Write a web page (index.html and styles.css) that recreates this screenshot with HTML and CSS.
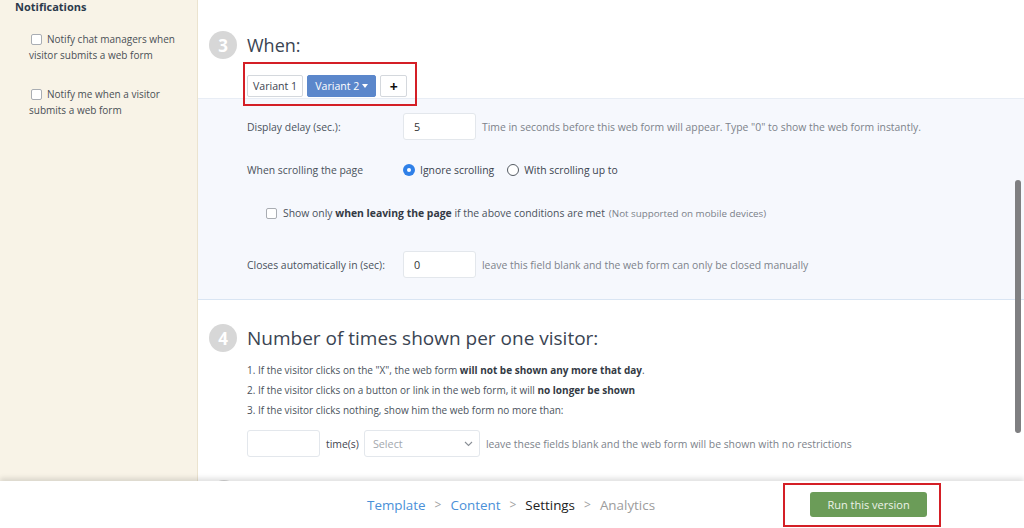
FILE: index.html
```html
<!DOCTYPE html>
<html>
<head>
<meta charset="utf-8">
<link rel="stylesheet" href="styles.css">
</head>
<body>
<div class="app">
  <div class="top">
    <aside class="sidebar">
      <div class="side-title">Notifications</div>
      <label class="notify"><span class="cb"></span>Notify chat managers when visitor submits a web form</label>
      <label class="notify"><span class="cb"></span>Notify me when a visitor submits a web form</label>
    </aside>
    <main class="main">
      <section class="step">
        <div class="step-head">
          <span class="num">3</span>
          <h2 class="step-title">When:</h2>
        </div>
        <div class="variants">
          <span class="vbtn">Variant 1</span>
          <span class="vbtn active">Variant 2 <span class="caret"></span></span>
          <span class="vbtn plus">+</span>
        </div>
      </section>
      <div class="panel">
        <div class="row">
          <span class="lbl">Display delay (sec.):</span>
          <span class="input">5</span>
          <span class="help">Time in seconds before this web form will appear. Type "0" to show the web form instantly.</span>
        </div>
        <div class="row row-radio">
          <span class="lbl">When scrolling the page</span>
          <span class="radio on"></span><span class="rtext">Ignore scrolling</span>
          <span class="radio"></span><span class="rtext">With scrolling up to</span>
        </div>
        <div class="row row-check">
          <span class="cb"></span>
          <span class="ctext">Show only <b>when leaving the page</b> if the above conditions are met</span>
          <span class="note">(Not supported on mobile devices)</span>
        </div>
        <div class="row row-close">
          <span class="lbl">Closes automatically in (sec):</span>
          <span class="input">0</span>
          <span class="help">leave this field blank and the web form can only be closed manually</span>
        </div>
      </div>
      <section class="step step4">
        <div class="step-head">
          <span class="num">4</span>
          <h2 class="step-title">Number of times shown per one visitor:</h2>
        </div>
        <ol class="rules">
          <li>1. If the visitor clicks on the "X", the web form <b>will not be shown any more that day</b>.</li>
          <li>2. If the visitor clicks on a button or link in the web form, it will <b>no longer be shown</b></li>
          <li>3. If the visitor clicks nothing, show him the web form no more than:</li>
        </ol>
        <div class="times">
          <span class="input wide"></span>
          <span class="tlabel">time(s)</span>
          <span class="select">Select<svg class="chev" width="9" height="6" viewBox="0 0 9 6"><path d="M1 1l3.5 3.5L8 1" fill="none" stroke="#8a8f96" stroke-width="1.1"/></svg></span>
          <span class="help">leave these fields blank and the web form will be shown with no restrictions</span>
        </div>
        <span class="num next"></span>
      </section>
      <div class="scrollbar"></div>
    </main>
  </div>
  <footer class="footer">
    <nav class="crumbs">
      <span class="crumb done">Template</span>
      <span class="sep">&gt;</span>
      <span class="crumb done">Content</span>
      <span class="sep">&gt;</span>
      <span class="crumb current">Settings</span>
      <span class="sep">&gt;</span>
      <span class="crumb todo">Analytics</span>
    </nav>
    <div class="run-wrap">
      <span class="run">Run this version</span>
    </div>
  </footer>
</div>
</body>
</html>
```
FILE: styles.css
```css
* { box-sizing: border-box; }
html, body { margin: 0; padding: 0; }
body {
  width: 1024px;
  height: 528px;
  overflow: hidden;
  font-family: "Open Sans", "Liberation Sans", sans-serif;
  color: #3b4450;
  background: #fff;
}
.app { display: flex; flex-direction: column; height: 528px; }
.top { display: flex; height: 481px; overflow: hidden; }

.sidebar {
  width: 198px;
  flex: none;
  background: #f8f3e7;
  border-right: 1px solid #ebe3cf;
  padding: 0 14px 0 15px;
}
.side-title {
  font-weight: 700;
  font-size: 11px;
  line-height: 14px;
  color: #2c3a4c;
  margin-top: 0;
}
.notify {
  display: block;
  font-size: 10px;
  line-height: 16px;
  color: #4a4f56;
  padding-left: 14px;
  margin-top: 17px;
}
.notify + .notify { margin-top: 23px; }
.notify .cb { margin: 0 5px 0 2px; vertical-align: -2px; }

.cb {
  display: inline-block;
  width: 11px;
  height: 11px;
  border: 1px solid #a9adb3;
  border-radius: 2px;
  background: #fff;
}

.main { flex: 1; position: relative; background: #fff; }

.step { padding: 0 0 0 11px; }
.step-head { display: flex; align-items: center; height: 28px; margin-top: 31px; }
.num {
  width: 28px;
  height: 28px;
  border-radius: 50%;
  background: #d7d7d7;
  color: #fff;
  font-weight: 700;
  font-size: 17px;
  display: flex;
  align-items: center;
  justify-content: center;
  flex: none;
}
.step-title {
  margin: 0 0 0 10px;
  font-weight: 400;
  font-size: 18px;
  color: #3a4452;
}
.step4 .step-title { font-size: 19px; }

.variants {
  display: inline-flex;
  gap: 4px;
  padding: 11px 5px 8px 2px;
  border: 2px solid #d41f26;
  position: relative;
  z-index: 2;
  margin-left: 34px;
  margin-top: 3px;
  width: 174px;
  height: 44px;
}
.vbtn {
  display: inline-flex;
  align-items: center;
  height: 22px;
  padding: 0 5px;
  border: 1px solid #d4d8dd;
  border-radius: 2px;
  background: #fff;
  font-size: 10.6px;
  color: #3c4450;
}
.vbtn.active {
  background: #5b87cb;
  border-color: #5b87cb;
  color: #fff;
  padding: 0 7px;
}
.caret {
  display: inline-block;
  margin-left: 3px;
  border-left: 3.5px solid transparent;
  border-right: 3.5px solid transparent;
  border-top: 4px solid #fff;
}
.vbtn.plus {
  width: 27px;
  justify-content: center;
  font-weight: 700;
  font-size: 14px;
  color: #111;
}

.panel {
  margin-top: -8px;
  background: #f6f8fd;
  border-top: 1px solid #e8edf5;
  border-bottom: 1px solid #d9e5f3;
  height: 202px;
  padding: 14px 0 0 49px;
  font-size: 10.4px;
  color: #4a525c;
}
.row { display: flex; align-items: center; }
.lbl { width: 156px; flex: none; color: #4a525c; }
.input {
  display: inline-flex;
  align-items: center;
  width: 73px;
  height: 27px;
  padding-left: 10px;
  background: #fff;
  border: 1px solid #e3e7ec;
  border-radius: 3px;
  font-size: 10.8px;
  color: #333;
  flex: none;
}
.help { margin-left: 6px; color: #7d838b; }
.row-radio { margin-top: 23px; }
.radio {
  width: 12px;
  height: 12px;
  border-radius: 50%;
  border: 1.5px solid #555b63;
  background: #fff;
  flex: none;
}
.radio.on { border: none; background: #2f80e8; position: relative; }
.radio.on::after {
  content: "";
  position: absolute;
  left: 4px; top: 4px;
  width: 4px; height: 4px;
  border-radius: 50%;
  background: #fff;
}
.rtext { margin: 0 13px 0 5px; color: #3c444f; }
.row-check { margin-top: 29px; padding-left: 19px; }
.row-check .cb { margin-right: 6px; }
.ctext { color: #4a525c; }
.ctext b { color: #333a44; }
.note { margin-left: 4px; font-size: 9.8px; color: #7b8189; }
.row-close { margin-top: 31px; }

.step4 .step-head { margin-top: 24px; }
.rules {
  list-style: none;
  margin: 8px 0 0 38px;
  padding: 0;
  font-size: 10px;
  line-height: 20px;
  color: #4a525c;
}
.rules b { color: #333a44; }
.times {
  display: flex;
  align-items: center;
  margin: 10px 0 0 38px;
  font-size: 10.4px;
}
.input.wide { width: 73px; }
.tlabel { margin: 0 5px 0 6px; color: #3f4650; }
.select {
  display: inline-flex;
  align-items: center;
  justify-content: space-between;
  width: 116px;
  height: 27px;
  padding: 0 6px 0 8px;
  border: 1px solid #e3e7ec;
  border-radius: 3px;
  background: #fff;
  color: #a3a8ae;
  font-size: 10.8px;
}
.num.next { margin: 23px 0 0 1px; width: 28px; height: 28px; }

.scrollbar {
  position: absolute;
  right: 3px;
  top: 180px;
  width: 6px;
  height: 253px;
  border-radius: 3px;
  background: #7f7f81;
}

.footer {
  height: 47px;
  flex: none;
  background: #fff;
  display: flex;
  align-items: center;
  position: relative;
  box-shadow: 0 -3px 5px rgba(0,0,0,0.12);
  z-index: 3;
}
.crumbs {
  display: flex;
  align-items: center;
  gap: 9px;
  margin-left: 367px;
  font-size: 13.4px;
}
.crumb.done { color: #4a90d8; }
.crumb.current { color: #222; }
.crumb.todo { color: #9c9c9c; }
.sep { color: #a0a0a0; font-size: 12px; }
.run-wrap {
  margin-left: 128px;
  width: 158px;
  height: 44px;
  border: 2px solid #d41f26;
  display: flex;
  align-items: center;
  padding-left: 25px;
}
.run {
  display: inline-flex;
  align-items: center;
  justify-content: center;
  width: 117px;
  height: 25px;
  border-radius: 3px;
  background: #6b9c58;
  color: #edf3e9;
  font-size: 11px;
}
```
